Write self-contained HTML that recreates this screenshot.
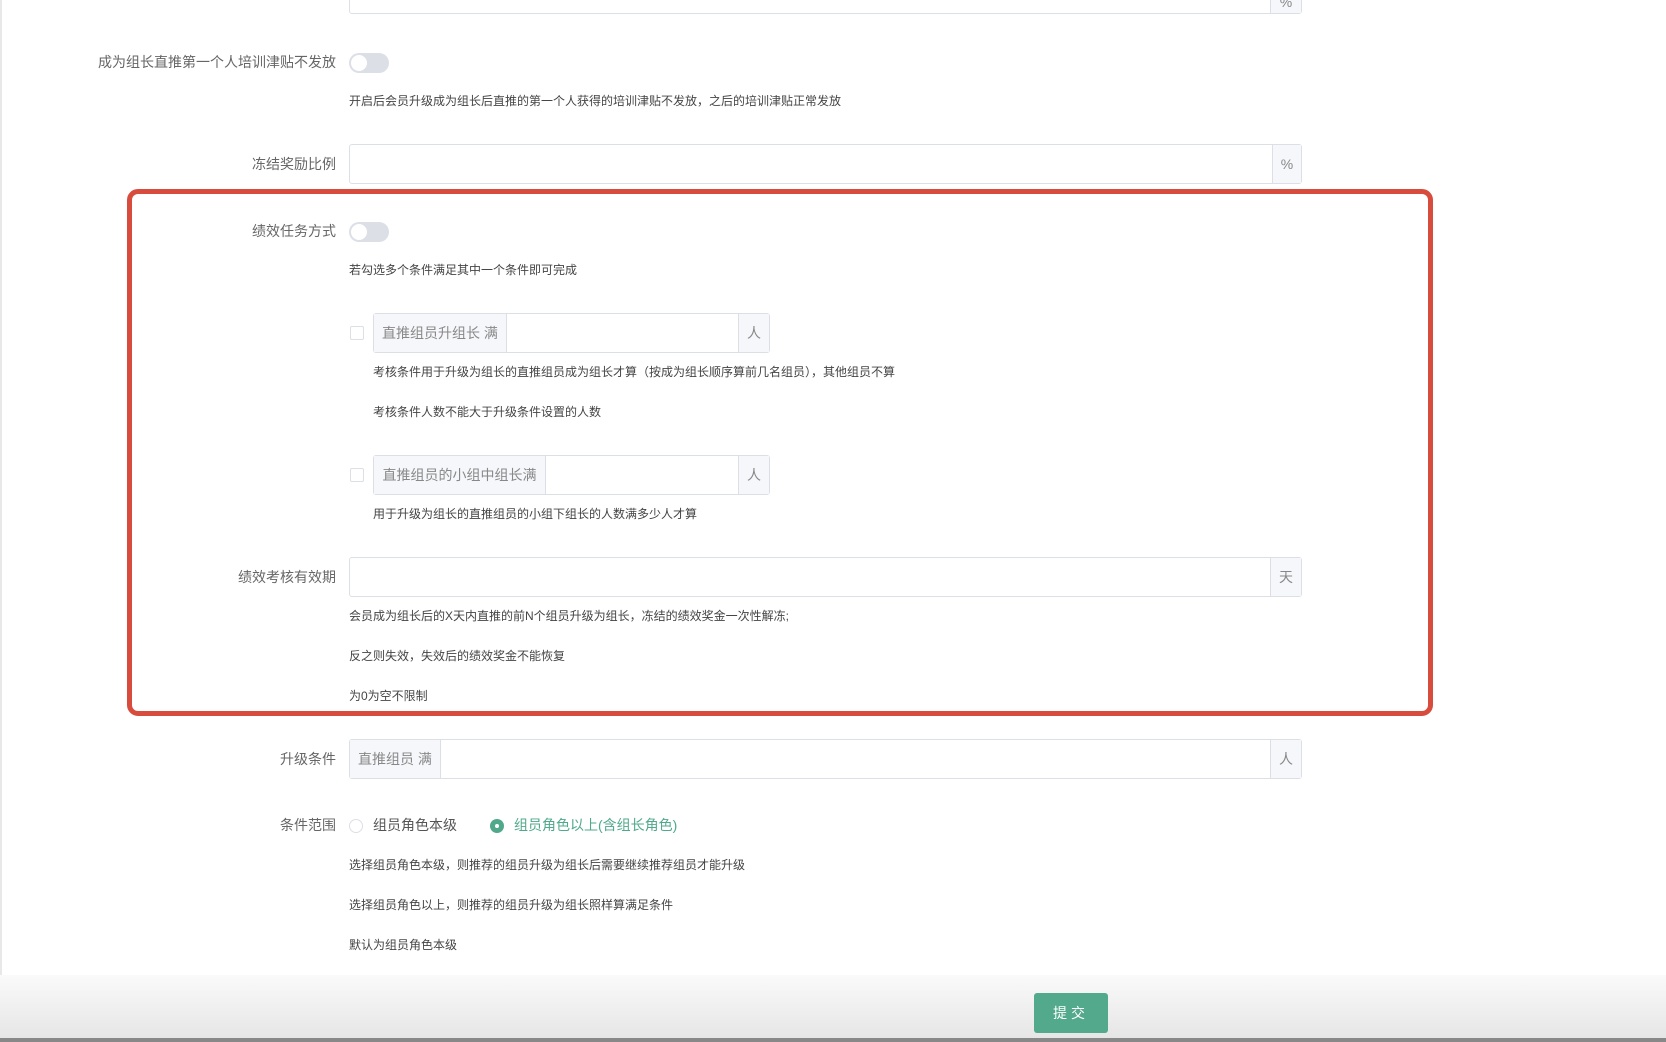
<!DOCTYPE html>
<html><head><meta charset="utf-8"><style>
*{box-sizing:border-box;margin:0;padding:0}
body{width:1666px;height:1042px;overflow:hidden;background:#fff;position:relative;font-family:"Liberation Sans","Noto Sans CJK SC",sans-serif;color:#555}
.a{position:absolute}
.lbl{position:absolute;right:1330px;font-size:14px;color:#666;white-space:nowrap;line-height:20px}
.help{position:absolute;font-size:12px;color:#444;white-space:nowrap;line-height:16px}
.inp{position:absolute;border:1px solid #dcdfe6;border-radius:3px;background:#fff;display:flex}
.ad{background:#f5f7fa;color:#888;font-size:14px;display:flex;align-items:center;justify-content:center}
.tg{position:absolute;width:40px;height:20px;border-radius:10px;background:#dcdfe6}
.tg::after{content:"";position:absolute;left:2px;top:2px;width:16px;height:16px;border-radius:50%;background:#fff}
.cb{position:absolute;width:14px;height:14px;border:1px solid #dcdfe6;border-radius:2px;background:#fff}
</style></head><body>
<div class="a" style="left:0;top:0;width:2px;height:1042px;background:#e8e8e8"></div>

<div class="inp" style="left:349px;top:-10px;width:953px;height:24px"><div style="flex:1"></div><div class="ad" style="width:31px;border-left:1px solid #dcdfe6">%</div></div>

<div class="lbl" style="top:52px">成为组长直推第一个人培训津贴不发放</div>
<div class="tg" style="left:349px;top:53px"></div>
<div class="help" style="left:349px;top:93px">开启后会员升级成为组长后直推的第一个人获得的培训津贴不发放，之后的培训津贴正常发放</div>

<div class="lbl" style="top:154px">冻结奖励比例</div>
<div class="inp" style="left:349px;top:144px;width:953px;height:40px"><div style="flex:1"></div><div class="ad" style="width:29px;border-left:1px solid #dcdfe6">%</div></div>

<div class="a" style="left:127px;top:189px;width:1306px;height:527px;border:5px solid #d84c3e;border-radius:11px"></div>

<div class="lbl" style="top:221px">绩效任务方式</div>
<div class="tg" style="left:349px;top:222px"></div>
<div class="help" style="left:349px;top:262px">若勾选多个条件满足其中一个条件即可完成</div>

<div class="cb" style="left:350px;top:326px"></div>
<div class="inp" style="left:373px;top:313px;width:397px;height:40px"><div class="ad" style="width:133px;border-right:1px solid #dcdfe6">直推组员升组长 满</div><div style="flex:1"></div><div class="ad" style="width:31px;border-left:1px solid #dcdfe6">人</div></div>
<div class="help" style="left:373px;top:364px">考核条件用于升级为组长的直推组员成为组长才算（按成为组长顺序算前几名组员），其他组员不算</div>
<div class="help" style="left:373px;top:404px">考核条件人数不能大于升级条件设置的人数</div>

<div class="cb" style="left:350px;top:468px"></div>
<div class="inp" style="left:373px;top:455px;width:397px;height:40px"><div class="ad" style="width:172px;border-right:1px solid #dcdfe6">直推组员的小组中组长满</div><div style="flex:1"></div><div class="ad" style="width:31px;border-left:1px solid #dcdfe6">人</div></div>
<div class="help" style="left:373px;top:506px">用于升级为组长的直推组员的小组下组长的人数满多少人才算</div>

<div class="lbl" style="top:567px">绩效考核有效期</div>
<div class="inp" style="left:349px;top:557px;width:953px;height:40px"><div style="flex:1"></div><div class="ad" style="width:31px;border-left:1px solid #dcdfe6">天</div></div>
<div class="help" style="left:349px;top:608px">会员成为组长后的X天内直推的前N个组员升级为组长，冻结的绩效奖金一次性解冻;</div>
<div class="help" style="left:349px;top:648px">反之则失效，失效后的绩效奖金不能恢复</div>
<div class="help" style="left:349px;top:688px">为0为空不限制</div>

<div class="lbl" style="top:749px">升级条件</div>
<div class="inp" style="left:349px;top:739px;width:953px;height:40px"><div class="ad" style="width:91px;border-right:1px solid #dcdfe6">直推组员 满</div><div style="flex:1"></div><div class="ad" style="width:31px;border-left:1px solid #dcdfe6">人</div></div>

<div class="lbl" style="top:815px">条件范围</div>
<div class="a" style="left:349px;top:819px;width:14px;height:14px;border:1px solid #dcdfe6;border-radius:50%"></div>
<div class="a" style="left:373px;top:815px;font-size:14px;color:#555;line-height:20px">组员角色本级</div>
<div class="a" style="left:490px;top:819px;width:14px;height:14px;border-radius:50%;background:#4fa98a"><div class="a" style="left:5px;top:5px;width:4px;height:4px;border-radius:50%;background:#fff"></div></div>
<div class="a" style="left:514px;top:815px;font-size:14px;color:#4fa98a;line-height:20px">组员角色以上(含组长角色)</div>
<div class="help" style="left:349px;top:857px">选择组员角色本级，则推荐的组员升级为组长后需要继续推荐组员才能升级</div>
<div class="help" style="left:349px;top:897px">选择组员角色以上，则推荐的组员升级为组长照样算满足条件</div>
<div class="help" style="left:349px;top:937px">默认为组员角色本级</div>

<div class="a" style="left:0;top:975px;width:1666px;height:63px;background:linear-gradient(#fafafa,#e6e6e6)"></div>
<div class="a" style="left:0;top:1038px;width:1666px;height:4px;background:#888"></div>
<div class="a" style="left:1034px;top:993px;width:74px;height:40px;border-radius:3px;background:#52a98c;color:#fff;font-size:14px;display:flex;align-items:center;justify-content:center;letter-spacing:4px">提交</div>
</body></html>
